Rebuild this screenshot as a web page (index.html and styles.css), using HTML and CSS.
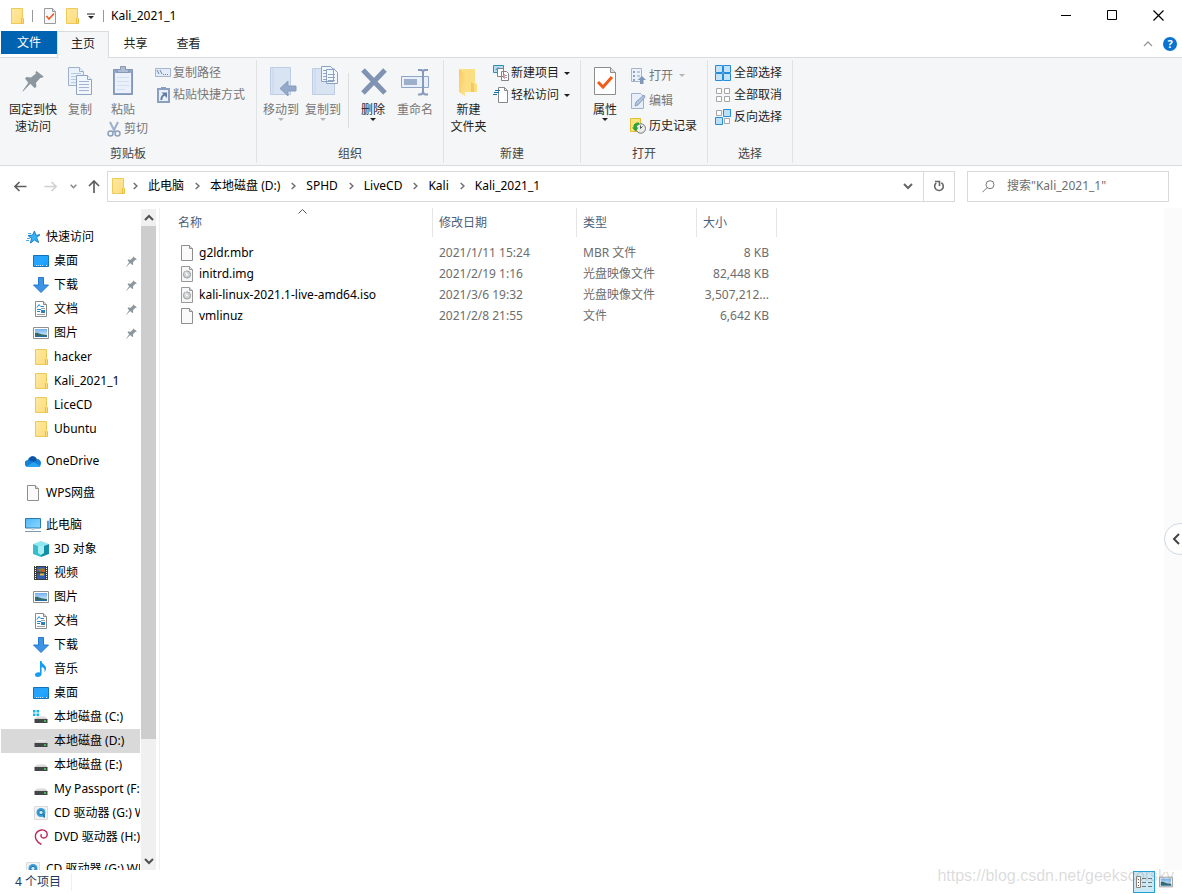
FILE: index.html
```html
<!DOCTYPE html>
<html lang="zh-CN">
<head>
<meta charset="utf-8">
<title>Kali_2021_1</title>
<link rel="stylesheet" href="styles.css">
</head>
<body>
<svg class="sprite" aria-hidden="true">
  <defs>
    <linearGradient id="gFolder" x1="0" y1="0" x2="1" y2="1"><stop offset="0" stop-color="#ffe9a0"/><stop offset="1" stop-color="#fddc7c"/></linearGradient>
    <linearGradient id="gFold2" x1="0" y1="0" x2="1" y2="1"><stop offset="0" stop-color="#f8c95c"/><stop offset="1" stop-color="#ffe28c"/></linearGradient>
    <linearGradient id="gBlue" x1="0" y1="0" x2="1" y2="1"><stop offset="0" stop-color="#2f9df4"/><stop offset=".5" stop-color="#22a7ff"/><stop offset="1" stop-color="#1d9bf8"/></linearGradient>
    <linearGradient id="gScreen" x1="0" y1="0" x2="1" y2="1"><stop offset="0" stop-color="#4db8f8"/><stop offset="1" stop-color="#8dd7fd"/></linearGradient>
    <linearGradient id="gSky" x1="0" y1="0" x2="0" y2="1"><stop offset="0" stop-color="#6fb0f0"/><stop offset="1" stop-color="#e8f3fb"/></linearGradient>
    <linearGradient id="gDrive" x1="0" y1="0" x2="0" y2="1"><stop offset="0" stop-color="#f1f1f1"/><stop offset="1" stop-color="#c4c4c4"/></linearGradient>
  </defs>
  <symbol id="folder" viewBox="0 0 16 16"><path d="M2.500.5h11v15h-11z" fill="url(#gFolder)" stroke="#efca58"/><path d="M12.500 15.500v-5l1-1 1 1v5z" fill="#fddf80" stroke="#e8be45"/></symbol>
  <symbol id="page" viewBox="0 0 16 16"><path d="M2.500.5h8l3 3v12h-11z" fill="#fafafa" stroke="#8f8f8f"/><path d="M10.500.5v3h3" fill="#ddd" stroke="#8f8f8f"/></symbol>
  <symbol id="disc" viewBox="0 0 16 16"><path d="M2.500.5h8l3 3v12h-11z" fill="#f7f7f7" stroke="#999"/><path d="M10.500.5v3h3" fill="#ddd" stroke="#999"/><circle cx="8" cy="8.500" r="3.600" fill="#cfd3d5" stroke="#9a9fa3"/><path d="M5.500 7l2.500 1.500L7 5z" fill="#eee"/><circle cx="8" cy="8.500" r="1" fill="#fff"/></symbol>
  <symbol id="check" viewBox="0 0 16 16"><path d="M2.500.5h8l3 3v12h-11z" fill="#f7f8fa" stroke="#9a9a9a"/><path d="M10.500.5v3h3" fill="#ddd" stroke="#9a9a9a"/><path d="M4.500 8l2.500 3 5-5.500" fill="none" stroke="#f05a1c" stroke-width="1.600"/></symbol>
  <symbol id="pin" viewBox="0 0 22 22"><path d="M14.500 1l7 5.500-1.500 1.500-1.500-.300-4.500 5 .400 4.300-2 1-4-4.200L1 21.500.5 21l5.800-8.300L3 8.500 4.500 7l4.500.5 5-4-.7-1.300z" fill="#8c969e"/></symbol>
  <symbol id="star" viewBox="0 0 16 16"><path d="M9.500 2l1.300 4.300 4.200-.5-3.400 2.700 2 5-4.200-2.500L5.500 14l1-4.600L3 6.500l4.500-.3z" fill="#35b3f5" stroke="#1580c8"/><path d="M3 4.500h3M2 9.500h3M1 11.500h3" stroke="#4aa8e8"/></symbol>
  <symbol id="desktop" viewBox="0 0 16 16"><path d="M.5 2.500h15v11H.5z" fill="url(#gBlue)" stroke="#0f74bc"/><path d="M3 12.500h8M13 12.500h1" stroke="#c9e8fb" stroke-dasharray="1 1"/></symbol>
  <symbol id="down" viewBox="0 0 16 16"><path d="M5.500.5h5V8h5L8 15.500.5 8h5z" fill="#3a93e4" stroke="#2279c9"/></symbol>
  <symbol id="doc" viewBox="0 0 16 16"><path d="M2.500.5h8l3 3v12h-11z" fill="#fff" stroke="#848b91"/><path d="M10.500.5v3h3" fill="#ddd" stroke="#848b91"/><path d="M4 6.500l2-3 1.500 2" fill="none" stroke="#2587cc"/><path d="M8 5.500h3M4 8.500h4M4 10.500h3" stroke="#2587cc"/><path d="M8 7.500h4M4 13.500h8" stroke="#a0a0a0"/><path d="M8 9h4v3H8z" fill="#2c80bd"/></symbol>
  <symbol id="pic" viewBox="0 0 16 16"><path d="M.5 2.500h15v11H.5z" fill="#fff" stroke="#909090"/><path d="M2 4h12v8H2z" fill="url(#gSky)"/><path d="M2 8c3-1 5 2 12 2v2H2z" fill="#356b69"/><path d="M2 11h12v1H2z" fill="#296da0"/></symbol>
  <symbol id="cloud" viewBox="0 0 16 16"><path d="M3.500 14a3.500 3.500 0 01-.5-7C4.500 2.500 9.500 2 11.500 6c3 0 4.500 2 4.500 4S15 14 13 14z" fill="#1580d5"/><path d="M3.500 7C5 2.500 10 2 12 6.500l-3 2.500z" fill="#0b54a8"/><path d="M1.500 13.500L8.500 9l7 4c-.5.700-1.500 1-2.500 1H3.500z" fill="#2aa4ef"/></symbol>
  <symbol id="pc" viewBox="0 0 16 16"><path d="M.5 1.500h15v9.500H.5z" fill="url(#gScreen)" stroke="#2a7ab4"/><path d="M6.500 11h3v2h-3z" fill="#b9cbd9"/><path d="M0 14.500h16" stroke="#7f98aa"/></symbol>
  <symbol id="cube" viewBox="0 0 16 16"><path d="M0 3l8-3 8 3-8 3z" fill="#8ee9ef"/><path d="M0 3l8 3v10l-8-3z" fill="#35bfce"/><path d="M16 3L8 6v10l8-3z" fill="#148da7"/><path d="M5 5l6 0v7l-3 2-3-2z" fill="#a6eef1"/></symbol>
  <symbol id="video" viewBox="0 0 16 16"><path d="M1 1h14v14H1z" fill="#3d3d3d"/><path d="M2.500 1v14M13.500 1v14" stroke="#fff" stroke-dasharray="1 1"/><path d="M4 2h8v5H4zM4 8.500h8V14H4z" fill="#315fb1"/><path d="M4 4h3l2-1 3 1v3H8z" fill="#9b7828"/><path d="M7 8.500h4v2H7z" fill="#e1bd35"/><path d="M8 5h2v2H8z" fill="#cc4927"/></symbol>
  <symbol id="music" viewBox="0 0 16 16"><path d="M7 0h1.600c.3 3.500 4.900 3.800 4.400 8-.2 1.500-.8 2.500-1.600 3 .8-3-.9-4.500-2.800-5V13c0 2-2 3-3.600 3C3 16 2 15 2 13.700c0-1.900 2.500-3 5-2.300z" fill="#189cf0"/></symbol>
  <symbol id="drive" viewBox="0 0 16 16"><path d="M4 7h8l3 3.500H1z" fill="url(#gDrive)"/><path d="M1.500 10h13v4h-13z" fill="#424648"/><path d="M11 12h2" stroke="#36e34b" stroke-width="1.500"/></symbol>
  <symbol id="cdrive" viewBox="0 0 16 16"><use href="#drive"/><path d="M0 1h2.500v2.500H0zM3.500 1H6v2.500H3.500zM0 4.500h2.500V7H0zM3.500 4.500H6V7H3.500z" fill="#11b5ec"/></symbol>
  <symbol id="cd" viewBox="0 0 16 16"><path d="M1.500 1.500h13v13h-13z" fill="#f1f2f3" stroke="#dadcdd"/><circle cx="8" cy="7.500" r="4.500" fill="#3c9ed6"/><circle cx="8" cy="7.500" r="2.200" fill="#c7e8f8" stroke="#1b6fa7"/><path d="M10 9h2v4l-2-1z" fill="#237db8"/></symbol>
  <symbol id="debian" viewBox="0 0 16 16"><path d="M8.500 15.500C3.500 13 1.200 8.500 3 4.500 5.500.2 11-.2 13.500 3c1.500 2.800.3 5.800-2.500 6-2.500.2-3.800-2-2.500-3.800" fill="none" stroke="#bb285c" stroke-width="1.400"/></symbol>
  <symbol id="chevR" viewBox="0 0 5 8"><path d="M.7 1L3.900 4 .7 7" fill="none" stroke="#707070" stroke-width="1.500"/></symbol>
  <symbol id="chevD" viewBox="0 0 10 7"><path d="M1 1l4 4 4-4" fill="none" stroke="currentColor" stroke-width="2"/></symbol>
  <symbol id="tri" viewBox="0 0 6 3"><path d="M0 0h6L3 3z" fill="currentColor"/></symbol>
  <symbol id="docs" viewBox="0 0 32 32"><g stroke="#9fb0ca" fill="#eaf1fb"><path d="M4.500 1.500h11l4 4v14h-15z"/><path d="M15.500 1.500v4h4"/></g><path d="M7 7.500h10M7 10.500h10M7 13.500h10M7 16.500h10" stroke="#b9c9e0"/><g stroke="#8fa5c6" fill="#f1f6fe"><path d="M12.500 9.500h11l4 4v15h-15z"/><path d="M23.500 9.500v4h4"/></g><path d="M15 15.500h10M15 18.500h10M15 21.500h10M15 24.500h10" stroke="#a3b5d0"/></symbol>
  <symbol id="paste" viewBox="0 0 32 32"><path d="M6.500 3.500h19v25h-19z" fill="#91a6c7" stroke="#7f96ba"/><path d="M8 7h16v20H8z" fill="#eaf1fc"/><path d="M10 11.500h12M10 15.500h12M10 19.500h12M10 23.500h8" stroke="#d3dff0"/><path d="M10.500 6.500v-3h3v-3h5v3h3v3z" fill="#aebdd3" stroke="#8499b7"/></symbol>
  <symbol id="moveto" viewBox="0 0 32 32"><path d="M5.500 1.500h20v27h-20z" fill="#d9e4f3" stroke="#becde4"/><path d="M8 2v26" stroke="#c7d5ea"/><path d="M31 20h-8v-5l-8 7.500 8 7.500v-5h8z" fill="#94a8c7" stroke="#879dbf"/></symbol>
  <symbol id="copyto" viewBox="0 0 32 32"><path d="M5.500 2.500h22v26h-22z" fill="#d9e4f3" stroke="#becde4"/><path d="M8 3v25" stroke="#c7d5ea"/><g stroke="#8aa1c3" fill="#f2f6fd"><path d="M14.500.5h9l3 3v12h-12zM19.500 3.500h8l3 3v11h-11z"/></g><path d="M16 4.500h3M16 7.500h3M16 10.500h3M16 13.500h3M21 8.500h7M21 11.500h7M21 14.500h7" stroke="#91a5c2"/></symbol>
  <symbol id="delete" viewBox="0 0 32 32"><path d="M6 4l22 23M28 4L6 27" stroke="#8093b3" stroke-width="5"/></symbol>
  <symbol id="rename" viewBox="0 0 32 32"><path d="M2.500 10.500h27v11h-27z" fill="#e9f0fb" stroke="#8fa5c6"/><path d="M5 13h13v6H5z" fill="#9eafca"/><path d="M19 4h3c2 0 2 1 2 2.500v19c0 2-1 3-3 3h-2M29 4h-3c-2 0-2 1-2 2.500v19c0 2 1 3 3 3h2" fill="none" stroke="#869bbc" stroke-width="2"/></symbol>
  <symbol id="newfolder" viewBox="0 0 32 32"><path d="M6 3h16v14l2 1v8H6z" fill="#fddf83"/><path d="M18 16l3 2v8h-3z" fill="#f5ca5c"/><path d="M6 3l6 5v22l-6-4z" fill="url(#gFold2)"/></symbol>
  <symbol id="props" viewBox="0 0 32 32"><path d="M5.500 1.500h16l5 5v22h-21z" fill="#fff" stroke="#8d8d8d"/><path d="M21.500 1.500v5h5" fill="#ddd" stroke="#8d8d8d"/><path d="M9 16l5 5 9-10" fill="none" stroke="#f25c1b" stroke-width="3"/></symbol>
  <symbol id="path" viewBox="0 0 16 16"><path d="M.5 3.500h15v8H.5z" fill="#e3ecf8" stroke="#a5b5cd"/><path d="M2 5l2 4M5 5l2 4" stroke="#6c83aa"/><path d="M8 9.500h6" stroke="#6c83aa" stroke-dasharray="1 1"/></symbol>
  <symbol id="shortcut" viewBox="0 0 16 16"><path d="M3 2h11v13H3z" fill="#e9f0fb" stroke="#8ba0c1" stroke-width="2"/><path d="M6 0h5v3H6z" fill="#8ba0c1"/><path d="M6.500 13c-.5-3 .5-4 3-5.500" fill="none" stroke="#657da5" stroke-width="2"/><path d="M6.500 5.500H12V11z" fill="#657da5"/></symbol>
  <symbol id="cut" viewBox="0 0 16 16"><path d="M4 1l5 10M12 1L7 11" stroke="#9eb0ca" stroke-width="2"/><g fill="none" stroke="#8ba0bf" stroke-width="1.500"><circle cx="4.500" cy="12.500" r="2.500"/><circle cx="11.500" cy="12.500" r="2.500"/></g></symbol>
  <symbol id="newitem" viewBox="0 0 16 16"><path d="M.5.5h10v7H.5z" fill="#b6def2" stroke="#318cb6"/><path d="M2 5l3-3 2 3" fill="#3f9cc6"/><path d="M4.500 3.500h6v8h-6zM8.500 6.500h5l2 2v7h-7z" fill="#fff" stroke="#828282"/><path d="M10 10.500h4M10 12.500h4" stroke="#8da4c0"/><path d="M11.500 9v5" stroke="#e3a2a8"/></symbol>
  <symbol id="easy" viewBox="0 0 16 16"><path d="M5.500.5h6l3 3v12h-9z" fill="#fff" stroke="#888"/><path d="M11.500.5v3h3" fill="none" stroke="#888"/><path d="M2 3.500h5M1 5.500h5M0 7.500h4" stroke="#1473af"/></symbol>
  <symbol id="open" viewBox="0 0 16 16"><path d="M1.500.5h10v13h-10z" fill="#ecf2fb" stroke="#a6b5cc"/><path d="M3 3h2v2H3zM3 7h2v2H3zM3 11h2v2H3z" fill="#8ea2c1"/><path d="M7 4h3M7 8h3" stroke="#8ea2c1"/><path d="M10 16v-4H7.500L12 8l4 4h-2.500v4z" fill="#8298bb"/></symbol>
  <symbol id="edit" viewBox="0 0 16 16"><path d="M1.500.5h9l3 3v12h-12z" fill="#e7effa" stroke="#9fb1cc"/><path d="M5 13l1-4 8-7 1 2-7 8z" fill="#b3c3dc" stroke="#8ba0c0"/></symbol>
  <symbol id="history" viewBox="0 0 16 16"><path d="M.5.5h10v13H.5z" fill="#ffe47d" stroke="#e5bd35"/><circle cx="10.800" cy="10.500" r="4.700" fill="#ececec" stroke="#777"/><path d="M10.500 7.500v3l2-2" fill="none" stroke="#555"/><path d="M9 4.500C5 4.500 3 6.500 3.500 9.500H2l3.500 4 3-4H6.500c0-2 .5-3 2.500-3z" fill="#28a634"/></symbol>
  <symbol id="selall" viewBox="0 0 16 16"><g fill="#c4e3fa" stroke="#268bd8"><path d="M.5.5h7v7h-7zM8.500.5h7v7h-7zM.5 8.500h7v7h-7zM8.500 8.500h7v7h-7z"/></g></symbol>
  <symbol id="selnone" viewBox="0 0 16 16"><g fill="#fff" stroke="#a6a6a6"><path d="M1.500 1.500h5v5h-5zM9.500 1.500h5v5h-5zM1.500 9.500h5v5h-5zM9.500 9.500h5v5h-5z"/></g></symbol>
  <symbol id="selinv" viewBox="0 0 16 16"><g fill="#fff" stroke="#a6a6a6"><path d="M1.500 1.500h5v5h-5zM9.500 9.500h5v5h-5z"/></g><g fill="#b9e0fa" stroke="#268bd8"><path d="M8.500.5h7v7h-7zM.5 8.500h7v7h-7z"/></g></symbol>
</svg>

<div class="window">
  <header class="titlebar">
    <svg class="i16"><use href="#folder"/></svg>
    <span class="tsep"></span>
    <button class="plain" aria-label="属性"><svg class="i16"><use href="#check"/></svg></button>
    <button class="plain" aria-label="新建文件夹"><svg class="i16"><use href="#folder"/></svg></button>
    <button class="plain qat" aria-label="自定义快速访问工具栏"><svg width="8" height="7" viewBox="0 0 8 7"><path d="M0 1h8" stroke="#222"/><path d="M1 3h6L4 6z" fill="#222"/></svg></button>
    <span class="tsep"></span>
    <h1 class="title">Kali_2021_1</h1>
    <div class="winbtns">
      <button class="plain" aria-label="最小化"><svg width="11" height="11"><path d="M0 5.500h10" stroke="#000"/></svg></button>
      <button class="plain" aria-label="最大化"><svg width="11" height="11"><path d="M.5.5h9v9h-9z" fill="none" stroke="#000"/></svg></button>
      <button class="plain" aria-label="关闭"><svg width="11" height="11"><path d="M.5.5l10 10M10.500.5l-10 10" stroke="#000" stroke-width="1.200"/></svg></button>
    </div>
  </header>

  <nav class="tabs">
    <button class="tab file">文件</button>
    <button class="tab active">主页</button>
    <button class="tab">共享</button>
    <button class="tab">查看</button>
    <div class="tabs-end">
      <button class="plain" aria-label="折叠功能区"><svg width="10" height="6" viewBox="0 0 10 6"><path d="M1 5l4-4 4 4" fill="none" stroke="#999" stroke-width="1.300"/></svg></button>
      <button class="help" aria-label="帮助">?</button>
    </div>
  </nav>

  <section class="ribbon">
    <div class="group g-clip">
      <div class="tools">
        <button class="big wide"><svg class="i32" viewBox="-5 -4 32 32"><use href="#pin" width="22" height="22"/></svg><span>固定到快<br>速访问</span></button>
        <button class="big off"><svg class="i32"><use href="#docs"/></svg><span>复制</span></button>
        <div class="stack">
          <button class="big off"><svg class="i32"><use href="#paste"/></svg><span>粘贴</span></button>
          <button class="small off"><svg class="i16"><use href="#cut"/></svg>剪切</button>
        </div>
        <div class="rows">
          <button class="small off"><svg class="i16"><use href="#path"/></svg>复制路径</button>
          <button class="small off"><svg class="i16"><use href="#shortcut"/></svg>粘贴快捷方式</button>
        </div>
      </div>
      <div class="glabel">剪贴板</div>
    </div>
    <div class="group g-org">
      <div class="tools">
        <button class="big off"><svg class="i32"><use href="#moveto"/></svg><span>移动到</span><svg class="tri"><use href="#tri"/></svg></button>
        <button class="big off"><svg class="i32"><use href="#copyto"/></svg><span>复制到</span><svg class="tri"><use href="#tri"/></svg></button>
        <span class="rsep"></span>
        <button class="big"><svg class="i32"><use href="#delete"/></svg><span>删除</span><svg class="tri"><use href="#tri"/></svg></button>
        <button class="big off"><svg class="i32"><use href="#rename"/></svg><span>重命名</span></button>
      </div>
      <div class="glabel">组织</div>
    </div>
    <div class="group g-new">
      <div class="tools">
        <button class="big wide"><svg class="i32"><use href="#newfolder"/></svg><span>新建<br>文件夹</span></button>
        <div class="rows">
          <button class="small"><svg class="i16"><use href="#newitem"/></svg>新建项目<svg class="tri"><use href="#tri"/></svg></button>
          <button class="small"><svg class="i16"><use href="#easy"/></svg>轻松访问<svg class="tri"><use href="#tri"/></svg></button>
        </div>
      </div>
      <div class="glabel">新建</div>
    </div>
    <div class="group g-open">
      <div class="tools">
        <button class="big"><svg class="i32"><use href="#props"/></svg><span>属性</span><svg class="tri"><use href="#tri"/></svg></button>
        <div class="rows tall">
          <button class="small off"><svg class="i16"><use href="#open"/></svg>打开<svg class="tri"><use href="#tri"/></svg></button>
          <button class="small off"><svg class="i16"><use href="#edit"/></svg>编辑</button>
          <button class="small"><svg class="i16"><use href="#history"/></svg>历史记录</button>
        </div>
      </div>
      <div class="glabel">打开</div>
    </div>
    <div class="group g-sel">
      <div class="tools">
        <div class="rows">
          <button class="small"><svg class="i16"><use href="#selall"/></svg>全部选择</button>
          <button class="small"><svg class="i16"><use href="#selnone"/></svg>全部取消</button>
          <button class="small"><svg class="i16"><use href="#selinv"/></svg>反向选择</button>
        </div>
      </div>
      <div class="glabel">选择</div>
    </div>
  </section>

  <div class="navbar">
    <div class="history">
      <button class="plain" aria-label="后退"><svg width="13" height="11" viewBox="0 0 13 11"><path d="M12.500 5.500H1M5.500 1L1 5.500 5.500 10" fill="none" stroke="#5e5e5e" stroke-width="1.600"/></svg></button>
      <button class="plain" aria-label="前进"><svg width="13" height="11" viewBox="0 0 13 11"><path d="M.5 5.500H12M7.500 1L12 5.500 7.500 10" fill="none" stroke="#d0d0d0" stroke-width="1.600"/></svg></button>
      <button class="plain" aria-label="最近浏览的位置"><svg width="7" height="5" viewBox="0 0 7 5"><path d="M.7.7l2.800 3 2.800-3" fill="none" stroke="#888" stroke-width="1.500"/></svg></button>
      <button class="plain" aria-label="向上"><svg width="12" height="13" viewBox="0 0 12 13"><path d="M6 13V1M1 6l5-5 5 5" fill="none" stroke="#5e5e5e" stroke-width="1.700"/></svg></button>
    </div>
    <div class="address">
      <svg class="i16"><use href="#folder"/></svg>
      <svg class="chev"><use href="#chevR"/></svg><a href="#">此电脑</a>
      <svg class="chev"><use href="#chevR"/></svg><a href="#">本地磁盘 (D:)</a>
      <svg class="chev"><use href="#chevR"/></svg><a href="#">SPHD</a>
      <svg class="chev"><use href="#chevR"/></svg><a href="#">LiveCD</a>
      <svg class="chev"><use href="#chevR"/></svg><a href="#">Kali</a>
      <svg class="chev"><use href="#chevR"/></svg><a href="#">Kali_2021_1</a>
      <button class="plain drop" aria-label="以前的位置"><svg width="10" height="7"><use href="#chevD"/></svg></button>
      <button class="plain refresh" aria-label="刷新"><svg width="12" height="12" viewBox="0 0 12 12"><path d="M3.200 2.900A4.300 4.300 0 108.300 2.600" fill="none" stroke="#666" stroke-width="1.600"/><path d="M2 1.500h4.500v4.500" fill="none" stroke="#666" stroke-width="1.600"/></svg></button>
    </div>
    <label class="search">
      <svg width="13" height="13" viewBox="0 0 13 13"><circle cx="8" cy="4.700" r="4" fill="none" stroke="#777"/><path d="M5 7.700L.5 12.200" stroke="#777"/></svg>
      <input type="text" aria-label="搜索" placeholder='搜索"Kali_2021_1"'>
    </label>
  </div>

  <main class="body">
    <nav class="tree">
      <a class="node top" href="#"><svg class="i16"><use href="#star"/></svg>快速访问</a>
      <a class="node" href="#"><svg class="i16"><use href="#desktop"/></svg>桌面<svg class="pin"><use href="#pin"/></svg></a>
      <a class="node" href="#"><svg class="i16"><use href="#down"/></svg>下载<svg class="pin"><use href="#pin"/></svg></a>
      <a class="node" href="#"><svg class="i16"><use href="#doc"/></svg>文档<svg class="pin"><use href="#pin"/></svg></a>
      <a class="node" href="#"><svg class="i16"><use href="#pic"/></svg>图片<svg class="pin"><use href="#pin"/></svg></a>
      <a class="node" href="#"><svg class="i16"><use href="#folder"/></svg>hacker</a>
      <a class="node" href="#"><svg class="i16"><use href="#folder"/></svg>Kali_2021_1</a>
      <a class="node" href="#"><svg class="i16"><use href="#folder"/></svg>LiceCD</a>
      <a class="node" href="#"><svg class="i16"><use href="#folder"/></svg>Ubuntu</a>
      <a class="node top" href="#"><svg class="i16"><use href="#cloud"/></svg>OneDrive</a>
      <a class="node top" href="#"><svg class="i16"><use href="#page"/></svg>WPS网盘</a>
      <a class="node top" href="#"><svg class="i16"><use href="#pc"/></svg>此电脑</a>
      <a class="node" href="#"><svg class="i16"><use href="#cube"/></svg>3D 对象</a>
      <a class="node" href="#"><svg class="i16"><use href="#video"/></svg>视频</a>
      <a class="node" href="#"><svg class="i16"><use href="#pic"/></svg>图片</a>
      <a class="node" href="#"><svg class="i16"><use href="#doc"/></svg>文档</a>
      <a class="node" href="#"><svg class="i16"><use href="#down"/></svg>下载</a>
      <a class="node" href="#"><svg class="i16"><use href="#music"/></svg>音乐</a>
      <a class="node" href="#"><svg class="i16"><use href="#desktop"/></svg>桌面</a>
      <a class="node" href="#"><svg class="i16"><use href="#cdrive"/></svg>本地磁盘 (C:)</a>
      <a class="node selected" href="#"><svg class="i16"><use href="#drive"/></svg>本地磁盘 (D:)</a>
      <a class="node" href="#"><svg class="i16"><use href="#drive"/></svg>本地磁盘 (E:)</a>
      <a class="node" href="#"><svg class="i16"><use href="#drive"/></svg>My Passport (F:)</a>
      <a class="node" href="#"><svg class="i16"><use href="#cd"/></svg>CD 驱动器 (G:) WD</a>
      <a class="node" href="#"><svg class="i16"><use href="#debian"/></svg>DVD 驱动器 (H:)</a>
      <a class="node top" href="#"><svg class="i16"><use href="#cd"/></svg>CD 驱动器 (G:) WD</a>
    </nav>
    <div class="scroll">
      <button class="plain" aria-label="向上滚动"><svg class="flip" width="10" height="7"><use href="#chevD"/></svg></button>
      <div class="thumb"></div>
      <button class="plain" aria-label="向下滚动"><svg width="10" height="7"><use href="#chevD"/></svg></button>
    </div>
    <section class="files">
      <table>
        <thead><tr>
          <th class="c-name">名称<svg class="sort" width="9" height="5" viewBox="0 0 9 5"><path d="M.5 4.500l4-4 4 4" fill="none" stroke="#555"/></svg></th>
          <th class="c-date">修改日期</th><th class="c-type">类型</th><th class="c-size">大小</th>
        </tr></thead>
        <tbody>
          <tr><td><span class="fname"><svg class="i16"><use href="#page"/></svg>g2ldr.mbr</span></td><td>2021/1/11 15:24</td><td>MBR 文件</td><td>8 KB</td></tr>
          <tr><td><span class="fname"><svg class="i16"><use href="#disc"/></svg>initrd.img</span></td><td>2021/2/19 1:16</td><td>光盘映像文件</td><td>82,448 KB</td></tr>
          <tr><td><span class="fname"><svg class="i16"><use href="#disc"/></svg>kali-linux-2021.1-live-amd64.iso</span></td><td>2021/3/6 19:32</td><td>光盘映像文件</td><td>3,507,212...</td></tr>
          <tr><td><span class="fname"><svg class="i16"><use href="#page"/></svg>vmlinuz</span></td><td>2021/2/8 21:55</td><td>文件</td><td>6,642 KB</td></tr>
        </tbody>
      </table>
    </section>
    <aside class="edge"><button class="expand" aria-label="展开"><svg width="8" height="12" viewBox="0 0 8 12"><path d="M7 1L2 6l5 5" fill="none" stroke="#444" stroke-width="2"/></svg></button></aside>
  </main>

  <footer class="status">
    <span class="count">4 个项目</span>
    <div class="views">
      <button class="plain view on" aria-label="详细信息"><svg width="16" height="14" viewBox="0 0 16 14"><path d="M.5 1.500h4v11h-4z" fill="#fff" stroke="#8a8178"/><path d="M2 4.500h1M2 7.500h1M2 10.500h1" stroke="#555"/><path d="M6 3.500h4M12 3.500h4M6 7.500h4M12 7.500h4M6 11.500h4M12 11.500h4" stroke="#777"/></svg></button>
      <button class="plain view" aria-label="大图标"><svg width="14" height="12" viewBox="0 2 16 12"><use href="#pic" width="16" height="16"/></svg></button>
    </div>
    <span class="watermark">https://blog.csdn.net/geekscorsky</span>
  </footer>
</div>
</body>
</html>
```
FILE: styles.css
```css
* { box-sizing: border-box; }
body {
  margin: 0;
  background: #fff;
  color: #000;
  font: 12px/18px "Noto Sans", "Noto Sans CJK SC", sans-serif;
}
button, input { font: inherit; color: inherit; }
button { border: 0; background: none; padding: 0; }
a { color: inherit; text-decoration: none; }
svg { display: block; flex: none; }
.sprite { position: absolute; width: 0; height: 0; }
.i16 { width: 16px; height: 16px; }
.i32 { width: 32px; height: 32px; }
.tri { width: 6px; height: 3px; }
.plain { display: flex; align-items: center; justify-content: center; }

.window { display: flex; flex-direction: column; height: 100vh; overflow: hidden; }

/* Title bar */
.titlebar { display: flex; align-items: center; height: 31px; padding: 0 1px 0 9px; flex: none; }
.tsep { width: 1px; height: 12px; background: #999; margin: 0 9px 0 7px; }
.titlebar .plain { margin-right: 6px; }
.titlebar .qat { width: 8px; height: 16px; margin: 2px 1px 0 1px; }
.titlebar .title { margin: 0; font-size: 12px; font-weight: 400; }
.titlebar .tsep + .title { margin-left: -2px; }
.winbtns { display: flex; margin-left: auto; }
.titlebar .winbtns .plain { width: 46px; height: 31px; margin: 0; }

/* Ribbon tabs */
.tabs { display: flex; height: 27px; flex: none; padding-left: 1px; border-bottom: 1px solid #dadbdc; }
.tab { width: 53px; height: 24px; padding-top: 1px; color: #222; }
.tab.file { width: 56px; height: 23px; background: #0063b1; color: #fff; }
.tab.active { width: 52px; height: 27px; padding-bottom: 3px; background: #f5f6f7; border: 1px solid #dadbdc; border-bottom: 0; }
.tabs-end { display: flex; align-items: center; gap: 10px; margin-left: auto; padding-right: 5px; }
.help { width: 14px; height: 14px; border-radius: 50%; background: #0873d2; color: #fff; font-size: 11px; line-height: 14px; font-weight: 700; }

/* Ribbon */
.ribbon { display: flex; height: 108px; flex: none; background: #f5f6f7; border-bottom: 1px solid #dadbdc; }
.group { display: flex; flex-direction: column; border-right: 1px solid #e1e2e4; margin: 2px 0; flex: none; }
.g-clip { width: 257px; }
.g-org { width: 187px; }
.g-new { width: 137px; }
.g-open { width: 127px; }
.g-sel { width: 85px; }
.tools { display: flex; align-items: flex-start; height: 85px; }
.g-clip .tools { gap: 1px; padding-left: 8px; }
.g-org .tools, .g-open .tools { padding-left: 3px; }
.g-sel .tools { padding-left: 7px; }
.glabel { text-align: center; color: #444; line-height: 18px; }
.big { display: flex; flex-direction: column; align-items: center; width: 42px; padding-top: 6px; line-height: 17px; color: #1e1e1e; white-space: nowrap; }
.big span { margin-top: 3px; }
.big.wide { width: 50px; }
.g-new .big.wide { width: 49px; }
.off { color: #777; }
.off .tri { color: #b5b5b5; }
.stack { display: flex; flex-direction: column; }
.small { display: flex; align-items: center; gap: 2px; height: 22px; color: #1e1e1e; white-space: nowrap; }
.small.off { color: #777; }
.small .tri { margin-left: 3px; }
.stack .small { margin-left: 4px; }
.rows { display: flex; flex-direction: column; padding-top: 2px; }
.g-clip .rows { margin-left: 6px; }
.g-open .small, .g-sel .small { gap: 3px; }
.rows.tall { margin-left: 4px; padding-top: 3px; }
.rows.tall .small { height: 25px; }
.rsep { width: 1px; height: 55px; margin: 13px 3px 0 4px; background: #dcdddf; }

/* Navigation bar */
.navbar { display: flex; align-items: center; height: 42px; flex: none; padding: 0 13px 2px 0; }
.history { display: flex; align-items: center; width: 107px; padding-left: 14px; }
.history .plain:nth-child(2) { margin-left: 17px; }
.history .plain:nth-child(3) { margin-left: 13px; }
.history .plain:nth-child(4) { margin-left: 11px; }
.address { display: flex; align-items: center; flex: 1; height: 31px; padding-left: 2px; border: 1px solid #d9d9d9; }
.address .chev { width: 5px; height: 8px; margin: 0 10px 0 11px; }
.address .i16 + .chev { margin-left: 7px; }
.address .drop { width: 30px; margin-left: auto; color: #666; }
.address .refresh { width: 31px; height: 29px; border-left: 1px solid #d9d9d9; }
.search { display: flex; align-items: center; width: 202px; height: 31px; margin-left: 12px; padding-left: 14px; border: 1px solid #d9d9d9; }
.search input { flex: 1; min-width: 0; margin-left: 12px; padding: 0; border: 0; outline: 0; background: none; }
.search input::placeholder { color: #6d6d6d; opacity: 1; }

/* Body */
.body { display: flex; flex: 1; min-height: 0; }
.tree { width: 140px; flex: none; padding: 17px 0 0 1px; overflow: hidden; }
.node { display: flex; align-items: center; gap: 5px; height: 24px; padding-left: 32px; white-space: nowrap; }
.node.top { padding-left: 24px; margin-top: 8px; }
.node.top:first-child { margin-top: 0; }
.node.selected { background: #d9d9d9; }
.node .pin { width: 11px; height: 11px; margin: 0 3px 0 auto; }
.scroll { display: flex; flex-direction: column; width: 15px; margin: 1px 3px 0 1px; flex: none; background: #f0f0f0; color: #505050; }
.scroll .plain { height: 17px; flex: none; }
.flip { transform: rotate(180deg); }
.thumb { height: 513px; background: #cdcdcd; }
.scroll .plain:last-child { margin-top: auto; }
.files { flex: 1; min-width: 0; padding-left: 11px; border-left: 1px solid #f0f0f0; }
table { border-collapse: separate; border-spacing: 0; table-layout: fixed; width: 606px; }
th { height: 29px; padding: 0 0 0 6px; text-align: left; font-weight: 400; color: #4c607a; border-right: 1px solid #e5e5e5; position: relative; }
.c-name { width: 262px; padding-left: 7px; }
.c-date { width: 144px; }
.c-type { width: 120px; }
.c-size { width: 80px; }
.sort { position: absolute; left: 50%; top: 1px; margin-left: -4px; }
td { height: 21px; padding: 0 0 0 6px; color: #6d6d6d; white-space: nowrap; }
td:last-child { text-align: right; padding-right: 8px; }
tbody::before { content: ""; display: block; height: 5px; }
.fname { display: flex; align-items: center; gap: 4px; color: #000; }
td:first-child { padding-left: 8px; }
.edge { display: flex; align-items: center; width: 18px; flex: none; background: #fbfbfb; overflow: hidden; }
.expand { width: 32px; height: 32px; flex: none; padding-left: 7px; border: 1px solid #cfd8e6; border-radius: 50%; background: #fff; }

/* Status bar */
.status { display: flex; align-items: center; height: 24px; flex: none; padding: 0 6px 0 15px; position: relative; color: #1e395b; }
.count { padding-right: 10px; border-right: 1px solid #f0f0f0; }
.views { display: flex; gap: 1px; margin-left: auto; }
.view { width: 20px; height: 22px; }
.view.on { width: 22px; border: 1px solid #26a0da; background: #cbe8f6; }
.watermark { position: absolute; right: 8px; top: -4px; font: 16px/20px "Liberation Sans", Arial, sans-serif; color: rgba(150, 150, 150, .34); pointer-events: none; }
```
